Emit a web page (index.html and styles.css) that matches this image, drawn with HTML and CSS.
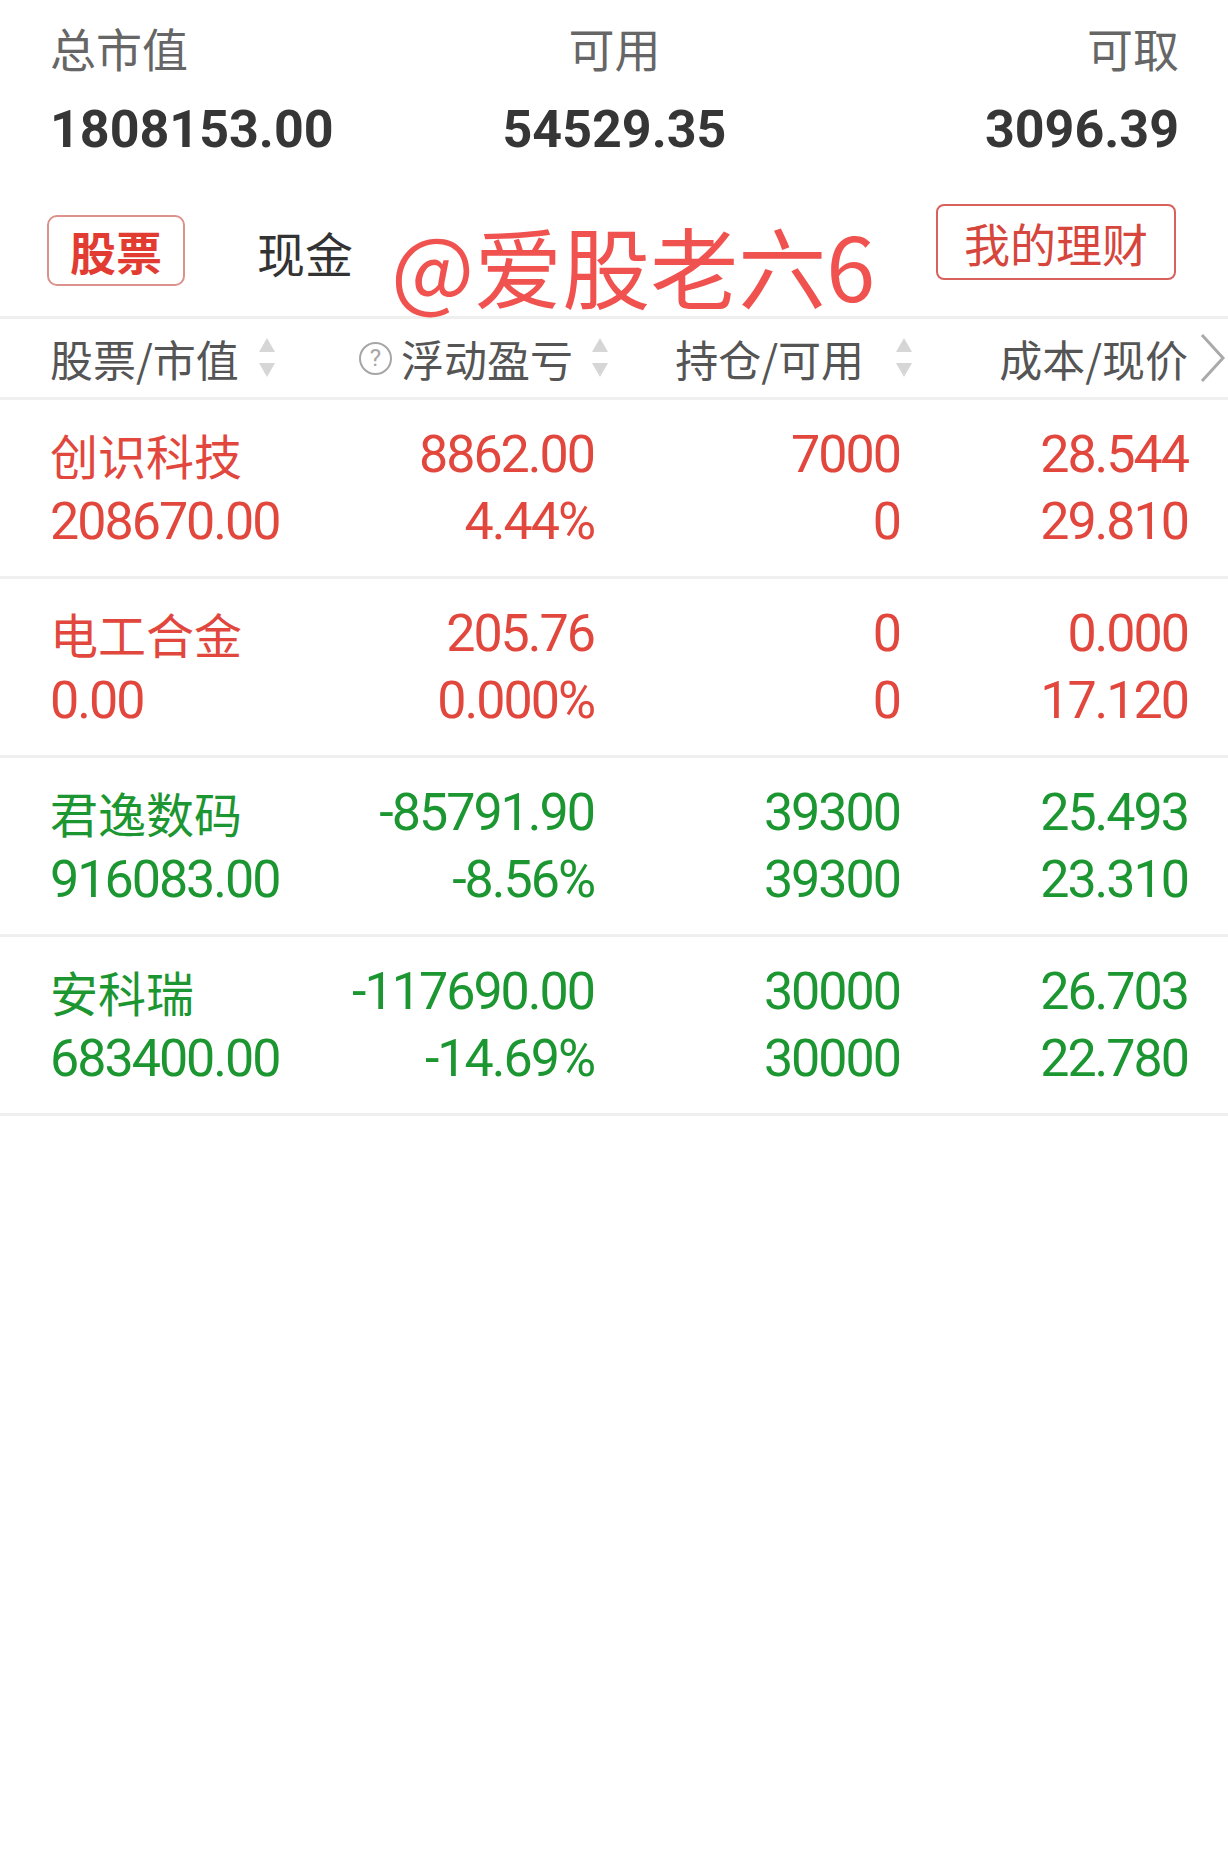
FILE: index.html
```html
<!DOCTYPE html>
<html lang="zh-CN">
<head>
    <meta charset="UTF-8">
    <meta name="viewport" content="width=device-width, initial-scale=1.0">
    <title>持仓</title>
    <link rel="stylesheet" href="styles.css">
</head>
<body>
    <div class="assets">
        <div class="asset-labels">
            <span>总市值</span>
            <span>可用</span>
            <span>可取</span>
        </div>
        <div class="asset-values">
            <span>1808153.00</span>
            <span>54529.35</span>
            <span>3096.39</span>
        </div>
    </div>

    <div class="tabs">
        <span class="tab active">股票</span>
        <span class="tab">现金</span>
        <span class="watermark">@爱股老六6</span>
        <span class="finance-btn">我的理财</span>
    </div>

    <div class="holdings">
        <div class="holdings-head">
            <div class="th th-name">
                <span>股票/市值</span>
                <svg class="sort" viewBox="0 0 16 40"><polygon points="8,0 16,14 0,14"/><polygon points="0,25 16,25 8,39"/></svg>
            </div>
            <div class="th th-profit">
                <span class="help">?</span>
                <span>浮动盈亏</span>
                <svg class="sort" viewBox="0 0 16 40"><polygon points="8,0 16,14 0,14"/><polygon points="0,25 16,25 8,39"/></svg>
            </div>
            <div class="th th-hold">
                <span>持仓/可用</span>
                <svg class="sort" viewBox="0 0 16 40"><polygon points="8,0 16,14 0,14"/><polygon points="0,25 16,25 8,39"/></svg>
            </div>
            <div class="th th-cost">
                <span>成本/现价</span>
                <svg class="more" viewBox="0 0 30 50"><polyline points="4,2 25,25 4,48"/></svg>
            </div>
        </div>

        <div class="holding up">
            <div class="cell"><div class="name">创识科技</div><div>208670.00</div></div>
            <div class="cell num"><div>8862.00</div><div>4.44%</div></div>
            <div class="cell num"><div>7000</div><div>0</div></div>
            <div class="cell num"><div>28.544</div><div>29.810</div></div>
        </div>
        <div class="holding up">
            <div class="cell"><div class="name">电工合金</div><div>0.00</div></div>
            <div class="cell num"><div>205.76</div><div>0.000%</div></div>
            <div class="cell num"><div>0</div><div>0</div></div>
            <div class="cell num"><div>0.000</div><div>17.120</div></div>
        </div>
        <div class="holding down">
            <div class="cell"><div class="name">君逸数码</div><div>916083.00</div></div>
            <div class="cell num"><div>-85791.90</div><div>-8.56%</div></div>
            <div class="cell num"><div>39300</div><div>39300</div></div>
            <div class="cell num"><div>25.493</div><div>23.310</div></div>
        </div>
        <div class="holding down">
            <div class="cell"><div class="name">安科瑞</div><div>683400.00</div></div>
            <div class="cell num"><div>-117690.00</div><div>-14.69%</div></div>
            <div class="cell num"><div>30000</div><div>30000</div></div>
            <div class="cell num"><div>26.703</div><div>22.780</div></div>
        </div>
    </div>
</body>
</html>
```

FILE: styles.css
```css
body {
    margin: 0;
    padding: 0;
    background-color: #fff;
    font-family: "Noto Sans CJK SC", sans-serif;
    color: #333;
    overflow-x: hidden;
}
.assets {
    padding: 17px 49px 0 50px;
}
.asset-labels, .asset-values {
    display: grid;
    grid-template-columns: 1fr 1fr 1fr;
}
.asset-labels span:nth-child(2), .asset-values span:nth-child(2) {
    text-align: center;
}
.asset-labels span:nth-child(3), .asset-values span:nth-child(3) {
    text-align: right;
}
.asset-labels {
    font-size: 46px;
    line-height: 60px;
    color: #666;
}
.asset-values {
    margin-top: 18px;
    font-family: Roboto, sans-serif;
    font-weight: bold;
    font-size: 52px;
    line-height: 70px;
    color: #363636;
}
.tabs {
    display: flex;
    align-items: flex-start;
    height: 151px;
    padding: 0 52px 0 47px;
    border-bottom: 3px solid #efefef;
}
.tab {
    margin-top: 63px;
    margin-left: 72px;
    font-size: 48px;
    line-height: 48px;
    color: #333;
}
.tab.active {
    margin-top: 50px;
    margin-left: 0;
    padding: 0 21px;
    border: 2px solid #dc928c;
    border-radius: 10px;
    font-size: 46px;
    font-weight: bold;
    line-height: 67px;
    color: #e23b32;
}
.watermark {
    margin: 55px 0 0 38px;
    font-size: 88px;
    line-height: 88px;
    color: #f0524f;
}
.finance-btn {
    margin: 39px 0 0 auto;
    padding: 0 26px;
    border: 2px solid #d8625b;
    border-radius: 8px;
    font-size: 46px;
    line-height: 72px;
    color: #d6463d;
}
.holdings-head, .holding {
    display: grid;
    grid-template-columns: 300px 244px 306px 288px;
    padding: 0 40px 0 50px;
    border-bottom: 3px solid #efefef;
}
.holdings-head {
    height: 78px;
    align-items: center;
    font-size: 43px;
    color: #555;
}
.th {
    display: flex;
    align-items: center;
    justify-content: flex-end;
}
.th-name {
    justify-content: flex-start;
}
.sort {
    width: 16px;
    height: 40px;
    fill: #d6d6d6;
}
.th-name .sort {
    margin-left: 20px;
}
.th-profit .sort {
    margin: 0 -14px 0 19px;
}
.th-hold .sort {
    margin: 0 -12px 0 32px;
}
.help {
    width: 29px;
    height: 29px;
    margin-right: 9px;
    border: 2px solid #a6a6a6;
    border-radius: 50%;
    font-family: Roboto, sans-serif;
    font-size: 24px;
    line-height: 29px;
    text-align: center;
    color: #a6a6a6;
}
.more {
    width: 30px;
    height: 50px;
    margin: 0 -40px 0 10px;
    fill: none;
    stroke: #aaa;
    stroke-width: 3;
}
.holding {
    padding-top: 21px;
    padding-bottom: 21px;
    font-family: Roboto, sans-serif;
    font-size: 52px;
    line-height: 67px;
    letter-spacing: -2px;
}
.holding .name {
    font-family: "Noto Sans CJK SC", sans-serif;
    font-size: 48px;
    letter-spacing: 0;
}
.num {
    text-align: right;
}
.up {
    color: #e2473d;
}
.down {
    color: #1b9631;
}
```
